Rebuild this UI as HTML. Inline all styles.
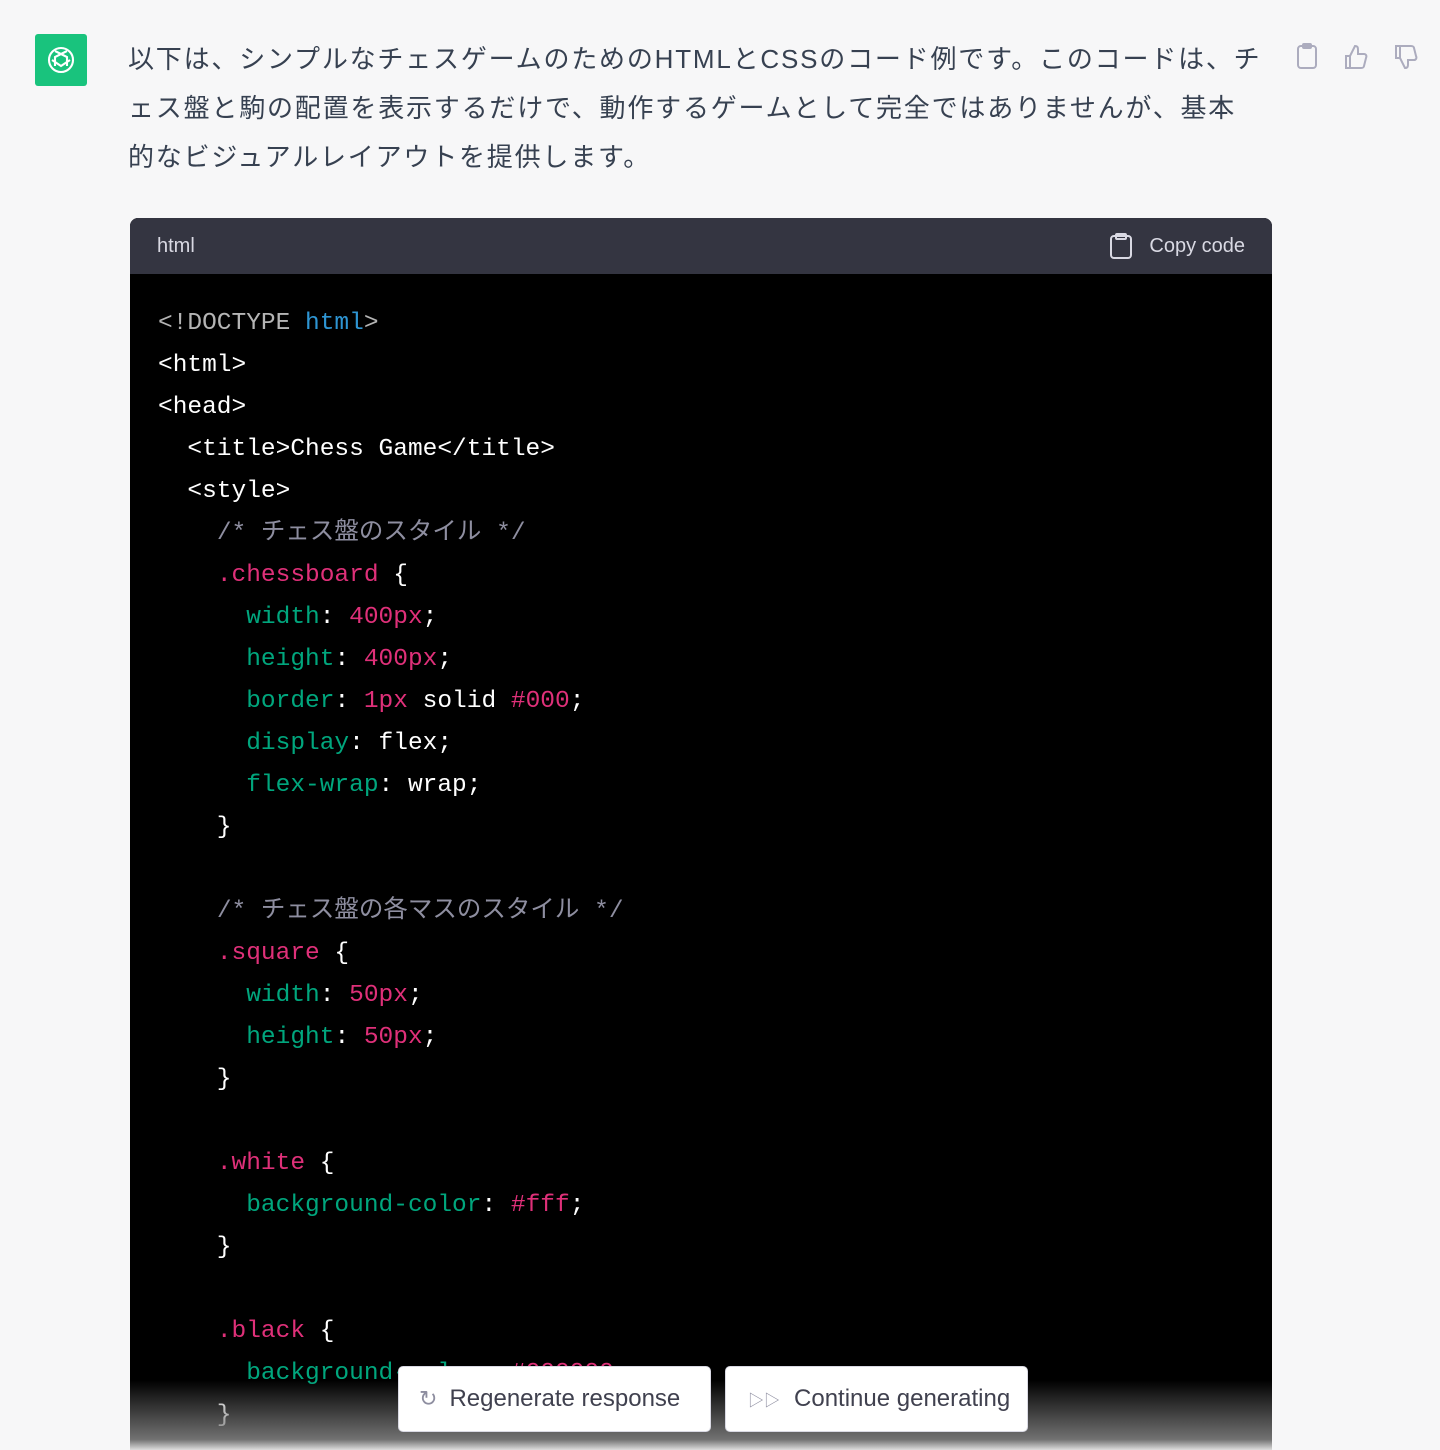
<!DOCTYPE html>
<html><head><meta charset="utf-8"><style>
html,body{margin:0;width:1440px;height:1450px;overflow:hidden}
body{background:#f7f7f8;position:relative;font-family:"Liberation Sans","Noto Sans CJK JP",sans-serif}
.logo{position:absolute;left:35px;top:34px;width:52px;height:52px;background:#19c37d;border-radius:3px;display:flex;align-items:center;justify-content:center}
.txt{position:absolute;left:128px;top:35px;font-size:26px;letter-spacing:1.8px;line-height:49px;color:#374151;white-space:nowrap}
.icons{position:absolute;top:42px;left:1294px}
.code{position:absolute;left:130px;top:218px;width:1142px;height:1232px;background:#000;border-radius:8px 8px 0 0;overflow:hidden}
.hdr{height:56px;background:#343541;color:#d9d9e3;font-size:20px;display:flex;align-items:center;justify-content:space-between;padding:0 27px}
pre{margin:0;padding:29px 0 0 28px;font-family:"Liberation Mono","Noto Sans CJK JP",monospace;font-size:24.5px;line-height:42px;color:#fff}
.b{color:#2e95d3}.r{color:#df3079}.g{color:#00a67d}.c{color:#8e8ea0}.gr{color:#b4b4b4}
.fade{position:absolute;left:0;right:0;top:1162px;height:70px;background:linear-gradient(to bottom,rgba(0,0,0,0),rgba(120,120,120,.95) 85%,#ddd)}
.btn{position:absolute;top:1366px;height:66px;background:#fff;border:1px solid #d9d9e3;border-radius:5px;display:flex;align-items:center;font-size:24px;color:#40414f;box-sizing:border-box}
</style></head><body>
<div class="logo"><svg width="36" height="36" viewBox="0 0 24 24" fill="none" stroke="#fff" stroke-width="1.4"><circle cx="12" cy="12" r="8"/><path d="M8 6l8 4v6M16 6l-8 4v6M6 12l6 4 6-4"/></svg></div>
<div class="txt">以下は、シンプルなチェスゲームのためのHTMLとCSSのコード例です。このコードは、チ<br>ェス盤と駒の配置を表示するだけで、動作するゲームとして完全ではありませんが、基本<br>的なビジュアルレイアウトを提供します。</div>
<div class="icons"><svg width="130" height="30" fill="none" stroke="#acacbe" stroke-width="2"><rect x="4" y="4" width="18" height="22" rx="3"/><rect x="9" y="2" width="8" height="4" rx="1"/><path d="M56 26h-4V14h4zM56 14l5-10c3 0 3 2 3 4v4h6c2 0 3 2 2 4l-2 8c0 1-1 2-3 2H56"/><path d="M106 4h-4v12h4zM106 16l5 10c3 0 3-2 3-4v-4h6c2 0 3-2 2-4l-2-8c0-1-1-2-3-2H106"/></svg></div>
<div class="code">
<div class="hdr"><span>html</span><span style="display:flex;align-items:center"><svg width="24" height="28" fill="none" stroke="#d9d9e3" stroke-width="2" style="margin-right:16px"><rect x="2" y="4" width="20" height="22" rx="3"/><rect x="7" y="2" width="10" height="5" rx="1"/></svg>Copy code</span></div>
<pre><span class="gr">&lt;!DOCTYPE</span> <span class="b">html</span><span class="gr">&gt;</span>
&lt;html&gt;
&lt;head&gt;
  &lt;title&gt;Chess Game&lt;/title&gt;
  &lt;style&gt;
    <span class="c">/* チェス盤のスタイル */</span>
    <span class="r">.chessboard</span> {
      <span class="g">width</span>: <span class="r">400px</span>;
      <span class="g">height</span>: <span class="r">400px</span>;
      <span class="g">border</span>: <span class="r">1px</span> solid <span class="r">#000</span>;
      <span class="g">display</span>: flex;
      <span class="g">flex-wrap</span>: wrap;
    }

    <span class="c">/* チェス盤の各マスのスタイル */</span>
    <span class="r">.square</span> {
      <span class="g">width</span>: <span class="r">50px</span>;
      <span class="g">height</span>: <span class="r">50px</span>;
    }

    <span class="r">.white</span> {
      <span class="g">background-color</span>: <span class="r">#fff</span>;
    }

    <span class="r">.black</span> {
      <span class="g">background-color</span>: <span class="r">#000000</span>;
    }
</pre>
<div class="fade"></div>
</div>
<div class="btn" style="left:398px;width:313px;padding-left:20px"><span style="font-size:22px;color:#8e8ea0;margin-right:12px">↻</span>Regenerate response</div>
<div class="btn" style="left:725px;width:303px;padding-left:22px"><span style="font-size:16px;color:#8e8ea0;margin-right:14px">▷▷</span>Continue generating</div>
</body></html>
